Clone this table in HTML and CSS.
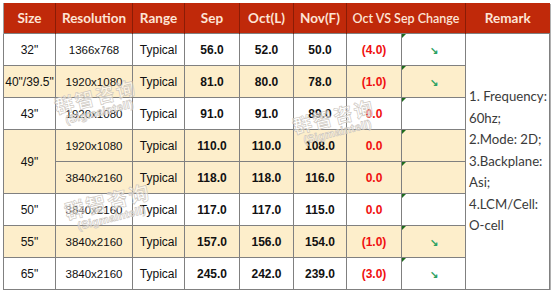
FILE: index.html
```html
<!DOCTYPE html>
<html>
<head>
<meta charset="utf-8">
<link rel="stylesheet" href="styles.css">
</head>
<body>
<div class="wrap">
<table class="grid">
<colgroup>
<col class="c1"><col class="c2"><col class="c3"><col class="c4"><col class="c5"><col class="c6"><col class="c7"><col class="c8"><col class="c9">
</colgroup>
<thead>
<tr><th>Size</th><th>Resolution</th><th>Range</th><th>Sep</th><th>Oct(L)</th><th>Nov(F)</th><th colspan="2" class="chg">Oct VS Sep Change</th><th>Remark</th></tr>
</thead>
<tbody>
<tr class="w"><td class="sz">32"</td><td class="res">1366x768</td><td class="rng">Typical</td><td class="b">56.0</td><td class="b">52.0</td><td class="b">50.0</td><td class="neg">(4.0)</td><td class="arr"><span class="down">↘</span></td>
<td rowspan="8" class="remark">1. Frequency:<br>60hz;<br>2.Mode: 2D;<br>3.Backplane:<br>Asi;<br>4.LCM/Cell:<br>O-cell</td></tr>
<tr class="y"><td class="sz">40"/39.5"</td><td class="res">1920x1080</td><td class="rng">Typical</td><td class="b">81.0</td><td class="b">80.0</td><td class="b">78.0</td><td class="neg">(1.0)</td><td class="arr"><span class="down">↘</span></td></tr>
<tr class="w"><td class="sz">43"</td><td class="res">1920x1080</td><td class="rng">Typical</td><td class="b">91.0</td><td class="b">91.0</td><td class="b">89.0</td><td class="neg">0.0</td><td class="arr"></td></tr>
<tr class="y"><td rowspan="2" class="sz">49"</td><td class="res">1920x1080</td><td class="rng">Typical</td><td class="b">110.0</td><td class="b">110.0</td><td class="b">108.0</td><td class="neg">0.0</td><td class="arr"></td></tr>
<tr class="y"><td class="res">3840x2160</td><td class="rng">Typical</td><td class="b">118.0</td><td class="b">118.0</td><td class="b">116.0</td><td class="neg">0.0</td><td class="arr"></td></tr>
<tr class="w"><td class="sz">50"</td><td class="res">3840x2160</td><td class="rng">Typical</td><td class="b">117.0</td><td class="b">117.0</td><td class="b">115.0</td><td class="neg">0.0</td><td class="arr"></td></tr>
<tr class="y"><td class="sz">55"</td><td class="res">3840x2160</td><td class="rng">Typical</td><td class="b">157.0</td><td class="b">156.0</td><td class="b">154.0</td><td class="neg">(1.0)</td><td class="arr"><span class="down">↘</span></td></tr>
<tr class="w"><td class="sz">65"</td><td class="res">3840x2160</td><td class="rng">Typical</td><td class="b">245.0</td><td class="b">242.0</td><td class="b">239.0</td><td class="neg">(3.0)</td><td class="arr"><span class="down">↘</span></td></tr>
</tbody>
</table>
<div class="wm wm1"><span class="cn">群智咨询</span><span class="en">(Sigmaintell)</span></div>
<div class="wm wm2"><span class="cn">群智咨询</span><span class="en">(Sigmaintell)</span></div>
<div class="wm wm3"><span class="cn">群智咨询</span><span class="en">(Sigmaintell)</span></div>
</div>
</body>
</html>
```
FILE: styles.css
```css
html, body { margin: 0; padding: 0; background: #fff; }
body { padding: 3px 0 0 3px; }
.wrap { position: relative; width: 546px; }
.grid {
  border-collapse: collapse;
  table-layout: fixed;
  width: 546px;
  font-family: "Liberation Sans", Arial, sans-serif;
  font-size: 12px;
  color: #111;
  box-shadow: 1px 1px 0 #b0b0b0;
}
.c1 { width: 52px; } .c2 { width: 77px; } .c3 { width: 52px; } .c4 { width: 55px; }
.c5 { width: 54px; } .c6 { width: 53px; } .c7 { width: 55px; } .c8 { width: 64px; } .c9 { width: 84px; }
th {
  height: 30px;
  padding: 0;
  background: #c0290a;
  color: #fde4d6;
  font-family: "Lato", "Open Sans", sans-serif;
  font-weight: 700;
  font-size: 13.5px;
  border-left: 1px solid #8a1c06;
  text-align: center;
}
th:first-child { border-left: 1px solid #a0a0a0; }
th.chg { font-size: 12.5px; font-weight: 600; }
td {
  height: 31px;
  padding: 0;
  border: 1px solid #808080;
  text-align: center;
  position: relative;
}
tr.y td { background: #fdeecb; }
tr.w td { background: #fff; }
td.sz { font-size: 12px; }
td.res { font-size: 11.5px; }
td.remark {
  background: #fff !important;
  text-align: left;
  padding-left: 3px;
  white-space: nowrap;
  font-family: "Lato", "Open Sans", sans-serif;
  font-size: 13.2px;
  line-height: 21.5px;
  color: #3a3a3a;
}
td.rng { font-size: 12px; }
td.b { font-weight: 700; }
td.neg { color: #f01010; font-weight: 700; }
td.arr::before {
  content: "";
  position: absolute;
  left: 0; top: 0;
  border-top: 4px solid #1d6b1d;
  border-right: 4px solid transparent;
}
.down { color: #2aa060; font-size: 10px; font-weight: 700; }
.wm {
  position: absolute;
  display: flex;
  flex-direction: column;
  align-items: center;
  pointer-events: none;
  color: rgba(255,255,255,0.5);
  -webkit-text-stroke: 0.6px #c9c3bb;
  font-family: "Noto Sans CJK SC", sans-serif;
  line-height: 1;
  transform: rotate(-14deg);
}
.wm .cn { font-size: 19px; font-weight: 700; letter-spacing: 2px; }
.wm .en { font-family: "Liberation Sans", sans-serif; font-size: 11px; font-weight: 700; margin-top: 2px; letter-spacing: 0.3px; }
.wm1 { left: 52px; top: 83px; }
.wm2 { left: 290px; top: 103px; }
.wm3 { left: 62px; top: 188px; }
.wm3 .cn { font-size: 20px; }
```
